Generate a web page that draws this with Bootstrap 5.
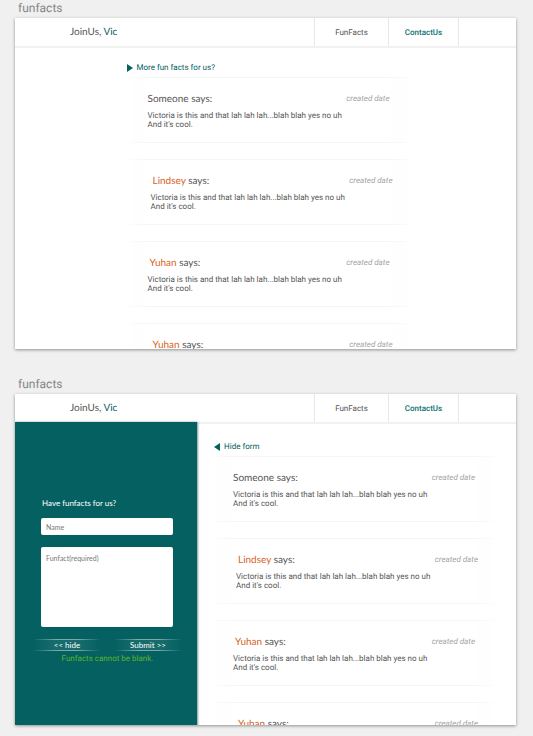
<!DOCTYPE html>
<html lang="en">
<head>
<meta charset="utf-8">
<meta name="viewport" content="width=device-width, initial-scale=1">
<title>funfacts</title>
<link href="https://cdn.jsdelivr.net/npm/bootstrap@5.3.0/dist/css/bootstrap.min.css" rel="stylesheet">
<style>
  :root { --teal: #056061; --ink: #555; --orange: #d9641f; --line: #e8e8e8; }
  body { background: #f0f0f0; color: var(--ink); font: 8px/9px Roboto, sans-serif; padding: 0 17px 11px 15px; text-rendering: geometricPrecision; }
  .board-title { font-size: 12px; line-height: 16px; font-weight: 400; color: #858585; margin: 0 3px 2px; }
  .artboard { aspect-ratio: 501 / 331; margin-bottom: 27px; background: #fff; overflow: hidden; box-shadow: 0 1px 3px rgba(0,0,0,.4); }
  .topbar { height: 30px; border-bottom: 2px solid #f1f1f1; flex: none; }
  .brand { font: 10px/12px Lato, sans-serif; color: var(--ink); margin-left: 55px; }
  .brand span, .teal-link { color: var(--teal); }
  .tab { border-left: 1px solid var(--line); color: var(--ink); font-size: 8px; }
  .tab-facts { width: 74px; }
  .tab-contact { width: 70px; color: #0b7170; font-weight: 500; }
  .tab-end { width: 58px; border-left: 1px solid var(--line); }
  .feed { padding: 15px 0 0 6px; }
  .feed-split { padding: 18px 6px 0 0; }
  .feed-inner { width: 290px; max-width: 100%; }
  .toggle-link { gap: 4px; margin: 0 0 4px 3px; line-height: 10px; }
  .feed-split .toggle-link { margin-left: 5px; }
  .toggle-link svg { width: 6px; height: 8px; fill: var(--teal); }
  .fact { height: 66px; margin-bottom: 16px; padding: 15px 24px 0 24px; border: 1px solid; border-width: 1px 0;
    border-image: linear-gradient(90deg, transparent, #f4f4f4 10%, #f4f4f4 90%, transparent) 1;
    background: linear-gradient(90deg, transparent 2%, #fefefe 3%, #fefefe 6%, transparent 8%, transparent 92%, #fefefe 94%, #fefefe 97%, transparent 98%); }
  .fact:nth-child(even) { padding-left: 27px; padding-right: 21px; }
  .fact h2 { font: 10px/12px Lato, sans-serif; margin: 0 0 6px; }
  .fact h2 a { color: var(--orange); padding-left: 2px; }
  .fact time { color: #a3a3a3; font-style: italic; line-height: 12px; }
  .side { width: 183px; background: var(--teal); color: #fff; margin-top: -2px; padding: 75px 16px 0 19px; border-right: 1px solid #9fb9b9; box-shadow: 0 0 2px rgba(0,0,0,.4); font-family: Lato, sans-serif; }
  .side .form-control { font: 7px/9px Lato, sans-serif; color: #555; border: 0; border-radius: 2px; padding: 4px 5px; }
  .side .form-control::placeholder { color: #777; }
  .side label { line-height: 12px; margin: 0 0 9px 1px; }
  .side-fields { margin: 0 8px 0 7px; }
  .side textarea.form-control { height: 80px; min-height: 0; margin-top: 12px; padding-top: 7px; resize: none; }
  .side input.form-control { height: 17px; min-height: 0; }
  .side-btn { border: 1px solid; border-width: 1px 0; color: #fff; font: 8px/10px Lato, sans-serif; padding: 0; width: 66px;
    border-image: linear-gradient(90deg, transparent, #79a9a9 35%, #79a9a9 65%, transparent) 1;
    background: linear-gradient(90deg, transparent, #176b6b 30%, #176b6b 70%, transparent); }
  .side-error { color: #55b52b; font: 8px/10px Roboto, sans-serif; margin: 3px 0 0 0; }
</style>
</head>
<body>

<h1 class="board-title">funfacts</h1>
<section class="artboard d-flex flex-column">
  <header class="topbar d-flex align-items-center">
    <a class="brand text-decoration-none" href="#">JoinUs, <span>Vic</span></a>
    <nav class="d-flex h-100 ms-auto">
      <a class="tab tab-facts d-flex align-items-center justify-content-center text-decoration-none" href="#">FunFacts</a>
      <a class="tab tab-contact d-flex align-items-center justify-content-center text-decoration-none" href="#">ContactUs</a>
      <div class="tab-end"></div>
    </nav>
  </header>
  <main class="feed d-flex justify-content-center">
    <div class="feed-inner">
      <a class="toggle-link teal-link d-flex align-items-center text-decoration-none" href="#"><svg viewBox="0 0 6 8" aria-hidden="true"><path d="M0 0L6 4L0 8Z"/></svg>More fun facts for us?</a>
      <div>
        <article class="fact">
          <div class="d-flex justify-content-between"><h2>Someone says:</h2><time>created date</time></div>
          <p class="mb-0">Victoria is this and that lah lah lah...blah blah yes no uh<br>And it's cool.</p>
        </article>
        <article class="fact">
          <div class="d-flex justify-content-between"><h2><a class="text-decoration-none" href="#">Lindsey</a> says:</h2><time>created date</time></div>
          <p class="mb-0">Victoria is this and that lah lah lah...blah blah yes no uh<br>And it's cool.</p>
        </article>
        <article class="fact">
          <div class="d-flex justify-content-between"><h2><a class="text-decoration-none" href="#">Yuhan</a> says:</h2><time>created date</time></div>
          <p class="mb-0">Victoria is this and that lah lah lah...blah blah yes no uh<br>And it's cool.</p>
        </article>
        <article class="fact">
          <div class="d-flex justify-content-between"><h2><a class="text-decoration-none" href="#">Yuhan</a> says:</h2><time>created date</time></div>
        </article>
      </div>
    </div>
  </main>
</section>

<h1 class="board-title">funfacts</h1>
<section class="artboard d-flex flex-column mb-0">
  <header class="topbar d-flex align-items-center">
    <a class="brand text-decoration-none" href="#">JoinUs, <span>Vic</span></a>
    <nav class="d-flex h-100 ms-auto">
      <a class="tab tab-facts d-flex align-items-center justify-content-center text-decoration-none" href="#">FunFacts</a>
      <a class="tab tab-contact d-flex align-items-center justify-content-center text-decoration-none" href="#">ContactUs</a>
      <div class="tab-end"></div>
    </nav>
  </header>
  <div class="d-flex flex-grow-1">
    <form class="side flex-shrink-0">
      <div class="side-fields">
        <label class="d-block" for="name">Have funfacts for us?</label>
        <input class="form-control" id="name" type="text" placeholder="Name">
        <textarea class="form-control" id="fact" placeholder="Funfact(required)" aria-label="Funfact"></textarea>
      </div>
      <div class="d-flex justify-content-between mt-2 pt-1">
        <button class="side-btn" type="button">&lt;&lt; hide</button>
        <button class="side-btn" type="submit">Submit &gt;&gt;</button>
      </div>
      <p class="side-error text-center">Funfacts cannot be blank.</p>
    </form>
    <main class="feed feed-split d-flex justify-content-center flex-grow-1">
      <div class="feed-inner">
        <a class="toggle-link teal-link d-flex align-items-center text-decoration-none" href="#"><svg viewBox="0 0 6 8" aria-hidden="true"><path d="M6 0L0 4L6 8Z"/></svg>Hide form</a>
        <div>
          <article class="fact">
            <div class="d-flex justify-content-between"><h2>Someone says:</h2><time>created date</time></div>
            <p class="mb-0">Victoria is this and that lah lah lah...blah blah yes no uh<br>And it's cool.</p>
          </article>
          <article class="fact">
            <div class="d-flex justify-content-between"><h2><a class="text-decoration-none" href="#">Lindsey</a> says:</h2><time>created date</time></div>
            <p class="mb-0">Victoria is this and that lah lah lah...blah blah yes no uh<br>And it's cool.</p>
          </article>
          <article class="fact">
            <div class="d-flex justify-content-between"><h2><a class="text-decoration-none" href="#">Yuhan</a> says:</h2><time>created date</time></div>
            <p class="mb-0">Victoria is this and that lah lah lah...blah blah yes no uh<br>And it's cool.</p>
          </article>
          <article class="fact">
            <div class="d-flex justify-content-between"><h2><a class="text-decoration-none" href="#">Yuhan</a> says:</h2><time>created date</time></div>
          </article>
        </div>
      </div>
    </main>
  </div>
</section>

<script src="https://cdn.jsdelivr.net/npm/bootstrap@5.3.0/dist/js/bootstrap.bundle.min.js"></script>
</body>
</html>
